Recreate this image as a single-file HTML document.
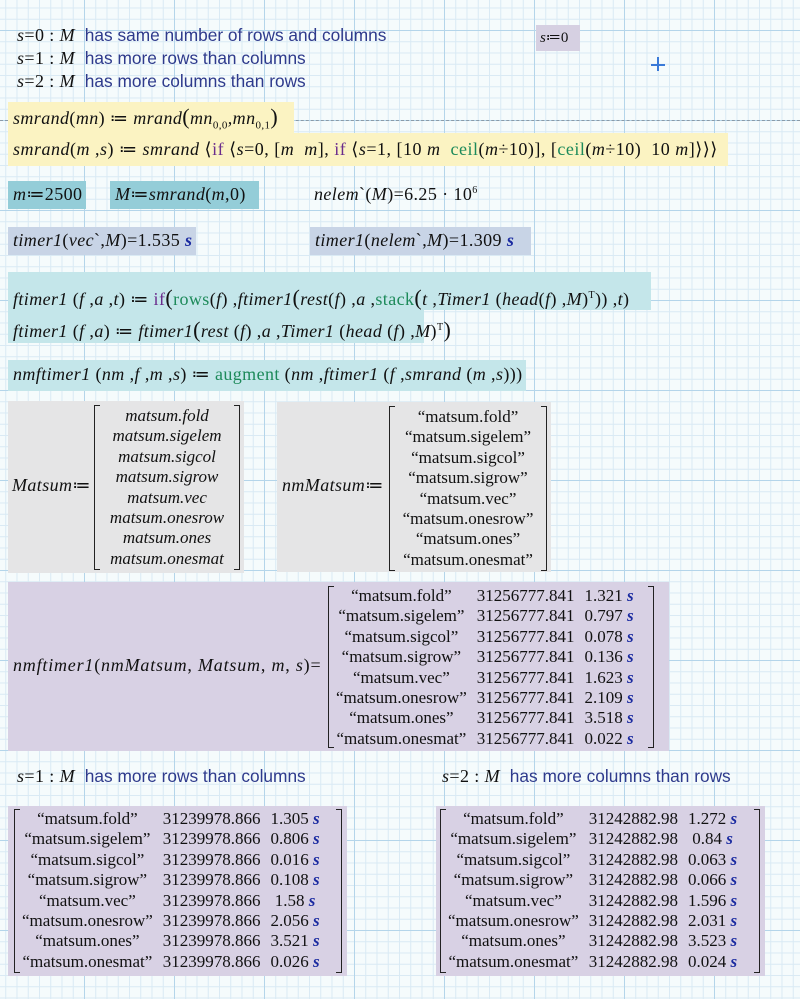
<!DOCTYPE html>
<html><head><meta charset="utf-8">
<style>
html,body{margin:0;padding:0}
body{width:800px;height:999px;position:relative;overflow:hidden;background-color:#f5fbfc;
background-image:
linear-gradient(to right,#b4d5ea 1px,transparent 1px),
linear-gradient(to bottom,#b4d5ea 1px,transparent 1px),
linear-gradient(to right,#d9eaf4 1px,transparent 1px),
linear-gradient(to bottom,#d9eaf4 1px,transparent 1px);
background-size:90px 90px,90px 90px,11.25px 11.25px,11.25px 11.25px;
background-position:84px 0,0 30px,84px 0,0 30px;
font-family:"Liberation Serif",serif;font-size:17px;color:#111}
.a{position:absolute;white-space:nowrap}
.e{font-size:18px;letter-spacing:.4px}
.m{font-style:italic}
.n{font-style:normal}
.t{font-family:"Liberation Sans",sans-serif;color:#2e3a8c;font-size:17.3px;letter-spacing:0}
.kw{color:#6a2c8c;font-style:normal}
.fn{color:#1d8a5a;font-style:normal}
.u{color:#1a2aa0;font-weight:bold;font-style:italic}
.box{position:absolute}
.mat{position:absolute;line-height:20.4px}
.mat table{border-collapse:collapse}
.mat td{padding:0 5px;text-align:center;font-style:normal}
.br{position:absolute;top:0;bottom:0;width:5px;border:1.5px solid #222}
.bl{left:0;border-right:none}.brr{right:0;border-left:none}
.p{font-style:normal;font-size:22px}
</style></head><body>

<div class="a e" style="left:17px;top:25px"><span class="m">s</span>=0 : <span class="m">M</span>&nbsp; <span class="t">has same number of rows and columns</span></div>
<div class="a e" style="left:17px;top:48px"><span class="m">s</span>=1 : <span class="m">M</span>&nbsp; <span class="t">has more rows than columns</span></div>
<div class="a e" style="left:17px;top:71px"><span class="m">s</span>=2 : <span class="m">M</span>&nbsp; <span class="t">has more columns than rows</span></div>

<div class="box" style="left:536px;top:25px;width:44px;height:26px;background:#d6d0e2"></div>
<div class="a" style="left:540px;top:28px;font-size:15px"><span class="m">s</span>≔0</div>
<div class="box" style="left:651px;top:64px;width:14px;height:1.5px;background:#3a7ad8"></div>
<div class="box" style="left:657px;top:57px;width:1.5px;height:14px;background:#3a7ad8"></div>

<div class="box" style="left:0;top:120px;width:800px;border-top:1px dashed #8a9aa8"></div>
<div class="box" style="left:8px;top:102px;width:286px;height:32px;background:#fbf3c2"></div>
<div class="box" style="left:8px;top:133px;width:720px;height:33px;background:#fbf3c2"></div>
<div class="a m e" style="left:13px;top:104px">smrand<span class="n">(</span>mn<span class="n">) ≔ </span>mrand<span class="p">(</span>mn<sub style="font-size:11px;font-style:normal">0,0</sub>,mn<sub style="font-size:11px;font-style:normal">0,1</sub><span class="p">)</span></div>
<div class="a m e" style="left:13px;top:139px;letter-spacing:.5px">smrand<span class="n">(</span>m<span class="n"> ,</span>s<span class="n">) ≔ </span>smrand<span class="n"> ⟨</span><span class="kw">if</span> <span class="n">⟨</span>s<span class="n">=0, [</span>m&nbsp; m<span class="n">], </span><span class="kw">if</span> <span class="n">⟨</span>s<span class="n">=1, [10 </span>m&nbsp; <span class="fn">ceil</span><span class="n">(</span>m<span class="n">÷10)], [</span><span class="fn">ceil</span><span class="n">(</span>m<span class="n">÷10)&nbsp; 10 </span>m<span class="n">]⟩⟩⟩</span></div>

<div class="box" style="left:8px;top:181px;width:78px;height:28px;background:#94cdd8"></div>
<div class="a e" style="left:13px;top:184px"><span class="m">m</span>≔2500</div>
<div class="box" style="left:110px;top:181px;width:149px;height:28px;background:#94cdd8"></div>
<div class="a m e" style="left:115px;top:184px">M<span class="n">≔</span>smrand<span class="n">(</span>m<span class="n">,0)</span></div>
<div class="a m e" style="left:314px;top:184px">nelem<span class="n">`(</span>M<span class="n">)=6.25 · 10<sup style="font-size:10px">6</sup></span></div>

<div class="box" style="left:8px;top:227px;width:188px;height:28px;background:#c8d4e6"></div>
<div class="a m e" style="left:13px;top:230px">timer1<span class="n">(</span>vec<span class="n">`,</span>M<span class="n">)=1.535 </span><span class="u">s</span></div>
<div class="box" style="left:310px;top:227px;width:221px;height:28px;background:#c8d4e6"></div>
<div class="a m e" style="left:315px;top:230px">timer1<span class="n">(</span>nelem<span class="n">`,</span>M<span class="n">)=1.309 </span><span class="u">s</span></div>

<div class="box" style="left:8px;top:272px;width:643px;height:38px;background:#c4e6ea"></div>
<div class="box" style="left:8px;top:309px;width:416px;height:34px;background:#c4e6ea"></div>
<div class="a m e" style="left:13px;top:285px">ftimer1<span class="n"> (</span>f<span class="n"> ,</span>a<span class="n"> ,</span>t<span class="n">) ≔ </span><span class="kw">if</span><span class="p">(</span><span class="fn">rows</span><span class="n">(</span>f<span class="n">) ,</span>ftimer1<span class="p">(</span>rest<span class="n">(</span>f<span class="n">) ,</span>a<span class="n"> ,</span><span class="fn">stack</span><span class="p">(</span>t<span class="n"> ,</span>Timer1<span class="n"> (</span>head<span class="n">(</span>f<span class="n">) ,</span>M<span class="n">)<sup style="font-size:10px">T</sup>)) ,</span>t<span class="n">)</span></div>
<div class="a m e" style="left:13px;top:317px">ftimer1<span class="n"> (</span>f<span class="n"> ,</span>a<span class="n">) ≔ </span>ftimer1<span class="p">(</span>rest<span class="n"> (</span>f<span class="n">) ,</span>a<span class="n"> ,</span>Timer1<span class="n"> (</span>head<span class="n"> (</span>f<span class="n">) ,</span>M<span class="n">)<sup style="font-size:10px">T</sup><span style="font-size:22px">)</span></span></div>

<div class="box" style="left:8px;top:360px;width:518px;height:31px;background:#c4e6ea"></div>
<div class="a m e" style="left:13px;top:364px">nmftimer1<span class="n"> (</span>nm<span class="n"> ,</span>f<span class="n"> ,</span>m<span class="n"> ,</span>s<span class="n">) ≔ </span><span class="fn">augment</span><span class="n"> (</span>nm<span class="n"> ,</span>ftimer1<span class="n"> (</span>f<span class="n"> ,</span>smrand<span class="n"> (</span>m<span class="n"> ,</span>s<span class="n">)))</span></div>

<!-- Matsum -->
<div class="box" style="left:8px;top:401px;width:236px;height:172px;background:#e5e5e6"></div>
<div class="a m e" style="left:12px;top:475px">Matsum<span class="n">≔</span></div>
<div class="mat m" style="left:94px;top:405px;width:146px;height:165px">
<div class="br bl"></div><div class="br brr"></div>
<div style="text-align:center;padding-top:1px">matsum.fold<br>matsum.sigelem<br>matsum.sigcol<br>matsum.sigrow<br>matsum.vec<br>matsum.onesrow<br>matsum.ones<br>matsum.onesmat</div></div>

<div class="box" style="left:277px;top:402px;width:274px;height:170px;background:#e5e5e6"></div>
<div class="a m e" style="left:282px;top:475px">nmMatsum<span class="n">≔</span></div>
<div class="mat" style="left:389px;top:406px;width:158px;height:165px">
<div class="br bl"></div><div class="br brr"></div>
<div style="text-align:center;padding-top:1px">“matsum.fold”<br>“matsum.sigelem”<br>“matsum.sigcol”<br>“matsum.sigrow”<br>“matsum.vec”<br>“matsum.onesrow”<br>“matsum.ones”<br>“matsum.onesmat”</div></div>

<!-- big result -->
<div class="box" style="left:8px;top:582px;width:661px;height:169px;background:#d8d1e4"></div>
<div class="a m e" style="left:13px;top:655px;letter-spacing:.8px">nmftimer1<span class="n">(</span>nmMatsum<span class="n">, </span>Matsum<span class="n">, </span>m<span class="n">, </span>s<span class="n">)=</span></div>
<div class="mat" style="left:328px;top:586px;width:326px;height:162px">
<div class="br bl"></div><div class="br brr"></div>
<table style="margin-left:3px"><tr><td>“matsum.fold”</td><td>31256777.841</td><td>1.321 <span class="u">s</span></td></tr>
<tr><td>“matsum.sigelem”</td><td>31256777.841</td><td>0.797 <span class="u">s</span></td></tr>
<tr><td>“matsum.sigcol”</td><td>31256777.841</td><td>0.078 <span class="u">s</span></td></tr>
<tr><td>“matsum.sigrow”</td><td>31256777.841</td><td>0.136 <span class="u">s</span></td></tr>
<tr><td>“matsum.vec”</td><td>31256777.841</td><td>1.623 <span class="u">s</span></td></tr>
<tr><td>“matsum.onesrow”</td><td>31256777.841</td><td>2.109 <span class="u">s</span></td></tr>
<tr><td>“matsum.ones”</td><td>31256777.841</td><td>3.518 <span class="u">s</span></td></tr>
<tr><td>“matsum.onesmat”</td><td>31256777.841</td><td>0.022 <span class="u">s</span></td></tr></table></div>

<div class="a e" style="left:17px;top:766px"><span class="m">s</span>=1 : <span class="m">M</span>&nbsp; <span class="t">has more rows than columns</span></div>
<div class="a e" style="left:442px;top:766px"><span class="m">s</span>=2 : <span class="m">M</span>&nbsp; <span class="t">has more columns than rows</span></div>

<div class="box" style="left:8px;top:806px;width:339px;height:170px;background:#d8d1e4"></div>
<div class="mat" style="left:14px;top:809px;width:328px;height:164px">
<div class="br bl"></div><div class="br brr"></div>
<table style="margin-left:3px"><tr><td>“matsum.fold”</td><td>31239978.866</td><td>1.305 <span class="u">s</span></td></tr>
<tr><td>“matsum.sigelem”</td><td>31239978.866</td><td>0.806 <span class="u">s</span></td></tr>
<tr><td>“matsum.sigcol”</td><td>31239978.866</td><td>0.016 <span class="u">s</span></td></tr>
<tr><td>“matsum.sigrow”</td><td>31239978.866</td><td>0.108 <span class="u">s</span></td></tr>
<tr><td>“matsum.vec”</td><td>31239978.866</td><td>1.58 <span class="u">s</span></td></tr>
<tr><td>“matsum.onesrow”</td><td>31239978.866</td><td>2.056 <span class="u">s</span></td></tr>
<tr><td>“matsum.ones”</td><td>31239978.866</td><td>3.521 <span class="u">s</span></td></tr>
<tr><td>“matsum.onesmat”</td><td>31239978.866</td><td>0.026 <span class="u">s</span></td></tr></table></div>

<div class="box" style="left:436px;top:806px;width:329px;height:170px;background:#d8d1e4"></div>
<div class="mat" style="left:440px;top:809px;width:320px;height:164px">
<div class="br bl"></div><div class="br brr"></div>
<table style="margin-left:3px"><tr><td>“matsum.fold”</td><td>31242882.98</td><td>1.272 <span class="u">s</span></td></tr>
<tr><td>“matsum.sigelem”</td><td>31242882.98</td><td>0.84 <span class="u">s</span></td></tr>
<tr><td>“matsum.sigcol”</td><td>31242882.98</td><td>0.063 <span class="u">s</span></td></tr>
<tr><td>“matsum.sigrow”</td><td>31242882.98</td><td>0.066 <span class="u">s</span></td></tr>
<tr><td>“matsum.vec”</td><td>31242882.98</td><td>1.596 <span class="u">s</span></td></tr>
<tr><td>“matsum.onesrow”</td><td>31242882.98</td><td>2.031 <span class="u">s</span></td></tr>
<tr><td>“matsum.ones”</td><td>31242882.98</td><td>3.523 <span class="u">s</span></td></tr>
<tr><td>“matsum.onesmat”</td><td>31242882.98</td><td>0.024 <span class="u">s</span></td></tr></table></div>

</body></html>
